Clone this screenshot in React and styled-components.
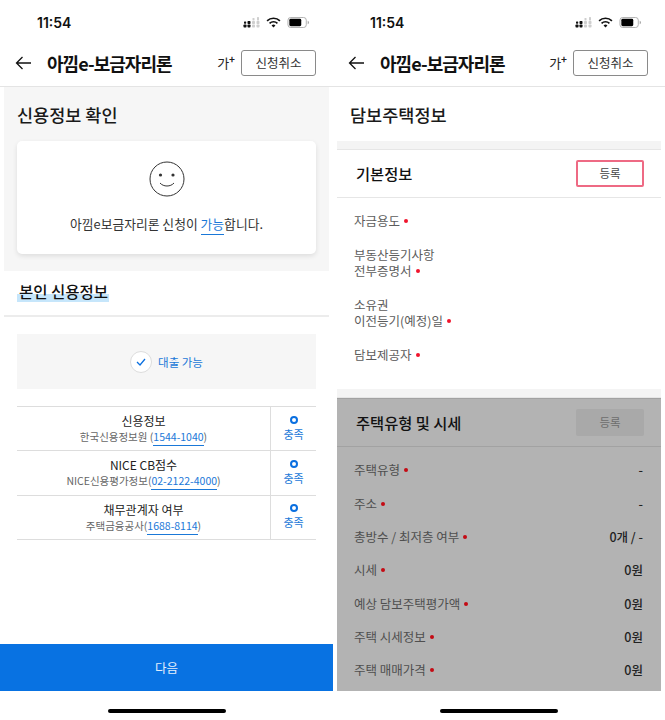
import React from 'react';
import styled, { createGlobalStyle } from 'styled-components';

const GlobalStyle = createGlobalStyle`
  html, body {
    margin: 0;
    padding: 0;
    background: #fff;
  }
  body {
    font-family: "Noto Sans CJK KR", "Noto Sans", sans-serif;
    color: #222;
  }
`;

const Page = styled.div`
  display: grid;
  grid-template-columns: 333px 332px;
  width: 665px;
  height: 720px;
  overflow: hidden;
`;

const Phone = styled.div`
  display: flex;
  flex-direction: column;
  height: 720px;
  background: #fff;
`;

const StatusBar = styled.div`
  display: flex;
  justify-content: space-between;
  align-items: center;
  height: 44px;
  padding: 0 23px 0 37px;
  box-sizing: border-box;
`;

const Clock = styled.span`
  font-family: Inter, "Liberation Sans", sans-serif;
  font-size: 14px;
  font-weight: 600;
  color: #111;
`;

const StatusIcons = styled.div`
  display: flex;
  align-items: center;
  gap: 6px;
`;

const Header = styled.div`
  display: flex;
  align-items: center;
  height: 43px;
  padding: 0 17px 5px 15px;
  box-sizing: border-box;
  border-bottom: 1px solid #e4e4e4;
`;

const BackButton = styled.svg`
  width: 17px;
  height: 14px;
  flex: none;
  margin-right: 15px;
`;

const HeaderTitle = styled.h1`
  flex: 1;
  margin: 0;
  font-size: 18px;
  font-weight: 700;
  letter-spacing: -0.95px;
  color: #111;
  white-space: nowrap;
`;

const FontSize = styled.span`
  font-size: 13px;
  color: #222;
  margin-right: 6px;
  sup {
    font-size: 10px;
    font-weight: 700;
    line-height: 0;
    vertical-align: 5px;
  }
`;

const CancelButton = styled.button`
  width: 75px;
  height: 26px;
  padding: 0 0 1px;
  border: 1px solid #8a8a8a;
  border-radius: 3px;
  background: #fff;
  font: inherit;
  font-size: 12.5px;
  color: #333;
`;

const Inset = styled.div`
  display: flex;
  flex-direction: column;
  flex: 1;
  margin: 0 4px;
  min-height: 0;
`;

const CheckSection = styled.section`
  height: 184px;
  padding: 0 13px;
  box-sizing: border-box;
  background: #f6f6f6;
`;

const PageTitle = styled.h2`
  display: flex;
  align-items: center;
  height: 54px;
  padding-top: 1px;
  box-sizing: border-box;
  margin: 0;
  font-size: 17.5px;
  font-weight: 500;
  color: #1a1a1a;
`;

const ResultCard = styled.div`
  display: flex;
  flex-direction: column;
  align-items: center;
  height: 113px;
  padding-top: 20px;
  box-sizing: border-box;
  background: #fff;
  border-radius: 5px;
  box-shadow: 0 2px 5px rgba(0, 0, 0, 0.1);
`;

const Smile = styled.svg`
  width: 36px;
  height: 36px;
  margin-bottom: 17px;
`;

const ResultText = styled.p`
  margin: 0;
  font-size: 12.8px;
  color: #333;
  white-space: nowrap;
`;

const PhoneLink = styled.span`
  color: #1a78d8;
  border-bottom: 1px solid #1a78d8;
  padding-bottom: 1px;
`;

const SubHeader = styled.div`
  height: 46px;
  padding: 8px 13px 0;
  box-sizing: border-box;
  border-bottom: 2px solid #ececec;
`;

const Highlight = styled.span`
  font-size: 15.5px;
  font-weight: 500;
  color: #111;
  padding: 0 1px 0 2px;
  background: linear-gradient(transparent 63%, #c6e6fb 63%);
`;

const Content = styled.div`
  display: flex;
  flex-direction: column;
  padding: 17px 13px 0;
  gap: 17px;
`;

const LoanBox = styled.div`
  display: flex;
  justify-content: center;
  align-items: center;
  gap: 6px;
  height: 55px;
  background: #f6f6f6;
`;

const CheckCircle = styled.span`
  display: flex;
  justify-content: center;
  align-items: center;
  width: 20px;
  height: 20px;
  border: 1px solid #ddd;
  border-radius: 50%;
  background: #fff;
`;

const LoanLabel = styled.span`
  font-size: 11.5px;
  color: #1a78d8;
`;

const Table = styled.div`
  border-top: 1px solid #ddd;
`;

const TableRow = styled.div`
  display: flex;
  height: 44.3px;
  border-bottom: 1px solid #ddd;
  box-sizing: border-box;
`;

const InfoCell = styled.div`
  display: flex;
  flex: 1;
  flex-direction: column;
  align-items: center;
  justify-content: center;
  border-right: 1px solid #ddd;
`;

const InfoName = styled.div`
  font-size: 12px;
  line-height: 17px;
  color: #222;
`;

const InfoAgency = styled.div`
  font-size: 10.5px;
  line-height: 16px;
  color: #666;
  white-space: nowrap;
`;

const StatusCell = styled.div`
  display: flex;
  flex-direction: column;
  align-items: center;
  justify-content: center;
  width: 45px;
  font-size: 11px;
  line-height: 15px;
  color: #1a78d8;
`;

const Ring = styled.span`
  width: 8px;
  height: 8px;
  margin-bottom: 3px;
  box-sizing: border-box;
  border: 2px solid #0a6fe0;
  border-radius: 50%;
`;

const NextButton = styled.button`
  height: 47px;
  margin-top: auto;
  padding: 0;
  border: 0;
  background: #0872e2;
  font: inherit;
  font-size: 12.5px;
  color: #e4effc;
`;

const HomeZone = styled.div`
  display: flex;
  justify-content: center;
  align-items: flex-start;
  height: 29px;
  padding-top: 18px;
  box-sizing: border-box;
`;

const HomeBar = styled.div`
  width: 118px;
  height: 4px;
  border-radius: 2px;
  background: #000;
`;

const TitleBlock = styled.div`
  padding-left: 13px;
`;

const Band = styled.div`
  height: 8px;
  flex: none;
  background: #f4f4f4;
  border-bottom: 1px solid #e6e6e6;
`;

const PanelHead = styled.div`
  display: flex;
  justify-content: space-between;
  align-items: center;
  height: 48px;
  flex: none;
  padding: 0 17px 0 19px;
  box-sizing: border-box;
  border-bottom: 1px solid ${p => (p.$dim ? '#a2a2a2' : '#e6e6e6')};
`;

const PanelTitle = styled.h3`
  margin: 0 0 2px;
  font-size: 15.3px;
  font-weight: 500;
  color: #111;
`;

const RegisterButton = styled.button`
  width: 68px;
  height: 27px;
  padding: 0 0 2px;
  border: ${p => (p.$dim ? '0' : '2px solid #ee6a84')};
  border-radius: 2px;
  background: ${p => (p.$dim ? '#a9a9a9' : '#fff')};
  font: inherit;
  font-size: 11.5px;
  color: ${p => (p.$dim ? '#6d6d6d' : '#444')};
`;

const BasicList = styled.div`
  display: flex;
  flex-direction: column;
  gap: 17px;
  height: 191px;
  padding: 15px 17px 0;
  box-sizing: border-box;
  flex: none;
`;

const FieldLabel = styled.div`
  font-size: 12.5px;
  line-height: 16.5px;
  color: #5c5c5c;
`;

const Required = styled.i`
  display: inline-block;
  width: 4px;
  height: 4px;
  margin-left: 4px;
  vertical-align: 3px;
  border-radius: 50%;
  background: ${p => (p.$dim ? '#c50a14' : '#f0142c')};
`;

const DimPanel = styled.div`
  display: flex;
  flex-direction: column;
  flex: 1;
  background: #b3b3b3;
  border-top: 1px solid #a2a2a2;
`;

const DimList = styled.div`
  padding: 7px 18px 0 17px;
`;

const DimRow = styled.div`
  display: flex;
  justify-content: space-between;
  align-items: center;
  height: 33.35px;
`;

const DimLabel = styled(FieldLabel)`
  color: #4f4f4f;
`;

const DimValue = styled.span`
  margin-bottom: 2px;
  font-size: 12.5px;
  font-weight: 500;
  color: #222;
`;

const StatusGlyphs = () => (
  <StatusIcons>
    <svg width="17" height="11" viewBox="0 0 17 11">
      <g fill="#111">
        <rect x="1" y="4.500" width="2.200" height="2.200" rx=".6" />
        <rect x="4.500" y="4" width="3" height="3" rx=".7" />
        <rect x=".5" y="7.500" width="3" height="3" rx=".7" />
        <rect x="4.500" y="7.500" width="3" height="3" rx=".7" />
      </g>
      <g fill="#cfcfcf">
        <rect x="9" y="4" width="3" height="3" rx=".7" />
        <rect x="9" y="7.500" width="3" height="3" rx=".7" />
        <rect x="9.500" y="1" width="2" height="2.500" rx=".6" />
        <rect x="13.500" y="4" width="3" height="3" rx=".7" />
        <rect x="13.500" y="7.500" width="3" height="3" rx=".7" />
        <rect x="14" y="0" width="2" height="3.500" rx=".6" />
      </g>
    </svg>
    <svg width="15" height="11" viewBox="0 0 16 12">
      <path d="M1 4.200a10 10 0 0 1 14 0" fill="none" stroke="#111" strokeWidth="1.800" />
      <path d="M3.700 6.900a6.200 6.200 0 0 1 8.600 0" fill="none" stroke="#111" strokeWidth="1.800" />
      <path d="M8 11.500 5.900 9.200a3 3 0 0 1 4.200 0z" fill="#111" />
    </svg>
    <svg width="23" height="11" viewBox="0 0 24 12">
      <rect x=".5" y=".5" width="20" height="11" rx="3" fill="none" stroke="#aaa" />
      <rect x="2" y="2" width="13" height="8" rx="1.500" fill="#000" />
      <path d="M22 4v4c.9-.3 1.500-1.100 1.500-2s-.6-1.700-1.500-2z" fill="#aaa" />
    </svg>
  </StatusIcons>
);

const AppHeader = () => (
  <>
    <StatusBar>
      <Clock>11:54</Clock>
      <StatusGlyphs />
    </StatusBar>
    <Header>
      <BackButton viewBox="0 0 17 14">
        <path d="M16 7H1.500M7.500 1 1.500 7l6 6" fill="none" stroke="#111" strokeWidth="1.300" />
      </BackButton>
      <HeaderTitle>아낌e-보금자리론</HeaderTitle>
      <FontSize>가<sup>+</sup></FontSize>
      <CancelButton>신청취소</CancelButton>
    </Header>
  </>
);

const creditRows = [
  { name: '신용정보', before: '한국신용정보원 (', phone: '1544-1040', after: ')' },
  { name: 'NICE CB점수', before: 'NICE신용평가정보(', phone: '02-2122-4000', after: ')' },
  { name: '채무관계자 여부', before: '주택금융공사(', phone: '1688-8114', after: ')' },
];

const dimRows = [
  ['주택유형', '-'],
  ['주소', '-'],
  ['총방수 / 최저층 여부', '0개 / -'],
  ['시세', '0원'],
  ['예상 담보주택평가액', '0원'],
  ['주택 시세정보', '0원'],
  ['주택 매매가격', '0원'],
];

const CreditScreen = () => (
  <Phone>
    <AppHeader />
    <Inset>
      <CheckSection>
        <PageTitle>신용정보 확인</PageTitle>
        <ResultCard>
          <Smile viewBox="0 0 36 36">
            <circle cx="18" cy="18" r="17" fill="none" stroke="#333" strokeWidth="1" />
            <circle cx="11.500" cy="14" r="1.600" fill="#333" />
            <circle cx="24" cy="14" r="1.600" fill="#333" />
            <path d="M11 22c3.500 4 10.500 4 14 0" fill="none" stroke="#333" strokeWidth="1" />
          </Smile>
          <ResultText>아낌e보금자리론 신청이 <PhoneLink>가능</PhoneLink>합니다.</ResultText>
        </ResultCard>
      </CheckSection>
      <SubHeader>
        <Highlight>본인 신용정보</Highlight>
      </SubHeader>
      <Content>
        <LoanBox>
          <CheckCircle>
            <svg width="10" height="8" viewBox="0 0 10 8">
              <path d="M1 4l3 3 5-6" fill="none" stroke="#0a6fe0" strokeWidth="1.300" />
            </svg>
          </CheckCircle>
          <LoanLabel>대출 가능</LoanLabel>
        </LoanBox>
        <Table>
          {creditRows.map(row => (
            <TableRow key={row.name}>
              <InfoCell>
                <InfoName>{row.name}</InfoName>
                <InfoAgency>{row.before}<PhoneLink>{row.phone}</PhoneLink>{row.after}</InfoAgency>
              </InfoCell>
              <StatusCell>
                <Ring />
                충족
              </StatusCell>
            </TableRow>
          ))}
        </Table>
      </Content>
    </Inset>
    <NextButton>다음</NextButton>
    <HomeZone><HomeBar /></HomeZone>
  </Phone>
);

const HouseScreen = () => (
  <Phone>
    <AppHeader />
    <Inset>
      <TitleBlock>
        <PageTitle>담보주택정보</PageTitle>
      </TitleBlock>
      <Band />
      <PanelHead>
        <PanelTitle>기본정보</PanelTitle>
        <RegisterButton>등록</RegisterButton>
      </PanelHead>
      <BasicList>
        <FieldLabel>자금용도<Required /></FieldLabel>
        <FieldLabel>부동산등기사항<br />전부증명서<Required /></FieldLabel>
        <FieldLabel>소유권<br />이전등기(예정)일<Required /></FieldLabel>
        <FieldLabel>담보제공자<Required /></FieldLabel>
      </BasicList>
      <Band />
      <DimPanel>
        <PanelHead $dim>
          <PanelTitle>주택유형 및 시세</PanelTitle>
          <RegisterButton $dim>등록</RegisterButton>
        </PanelHead>
        <DimList>
          {dimRows.map(([label, value]) => (
            <DimRow key={label}>
              <DimLabel>{label}<Required $dim /></DimLabel>
              <DimValue>{value}</DimValue>
            </DimRow>
          ))}
        </DimList>
      </DimPanel>
    </Inset>
    <HomeZone><HomeBar /></HomeZone>
  </Phone>
);

const App = () => (
  <>
    <GlobalStyle />
    <Page>
      <CreditScreen />
      <HouseScreen />
    </Page>
  </>
);

export default App;
